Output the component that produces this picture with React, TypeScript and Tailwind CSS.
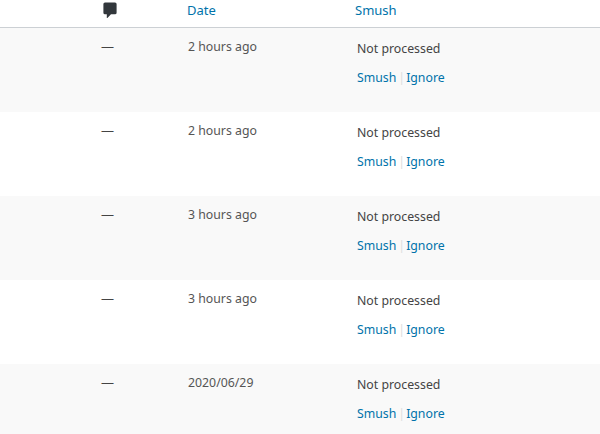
const rows = [
  { date: "2 hours ago" },
  { date: "2 hours ago" },
  { date: "3 hours ago" },
  { date: "3 hours ago" },
  { date: "2020/06/29" },
];

const font = { fontFamily: '"Noto Sans", "Open Sans", sans-serif' };

function CommentIcon() {
  return (
    <svg width="14" height="16" viewBox="0 0 14 16" className="fill-[#32373c]">
      <path d="M2 0.5h10q1.6 0 1.6 1.6v8.6q0 1.6-1.6 1.6H8l-3.6 3.6h-0.6v-3.6H2q-1.6 0-1.6-1.6V2.1Q0.4 0.5 2 0.5z" />
    </svg>
  );
}

export default function App() {
  return (
    <div className="w-[600px] h-[434px] overflow-hidden bg-white text-[12.3px] text-[#444]" style={font}>
      <div className="h-[28px] flex border-b border-[#ccd0d4] text-[13px] text-[#0073aa]">
        <div className="w-[187px] pl-[103px] pt-[2px]">
          <CommentIcon />
        </div>
        <div className="w-[168px] leading-[20px]">Date</div>
        <div className="leading-[20px]">Smush</div>
      </div>
      {rows.map((row, i) => (
        <div key={i} className={`h-[84px] flex ${i % 2 === 0 ? "bg-[#f9f9f9]" : "bg-white"}`}>
          <div className="w-[188px] pl-[101px] pt-[8px] leading-[20px] text-[13px]">—</div>
          <div className="w-[169px] pt-[9px] leading-[20px] text-[#555]">{row.date}</div>
          <div className="pt-[11px]">
            <div className="leading-[20px] text-[#444]">Not processed</div>
            <div className="mt-[9px] leading-[20px] text-[#0073aa] flex">
              <span>Smush</span>
              <span className="text-[#ddd] ml-[2px]">|</span>
              <span className="ml-[1px]">Ignore</span>
            </div>
          </div>
        </div>
      ))}
    </div>
  );
}
